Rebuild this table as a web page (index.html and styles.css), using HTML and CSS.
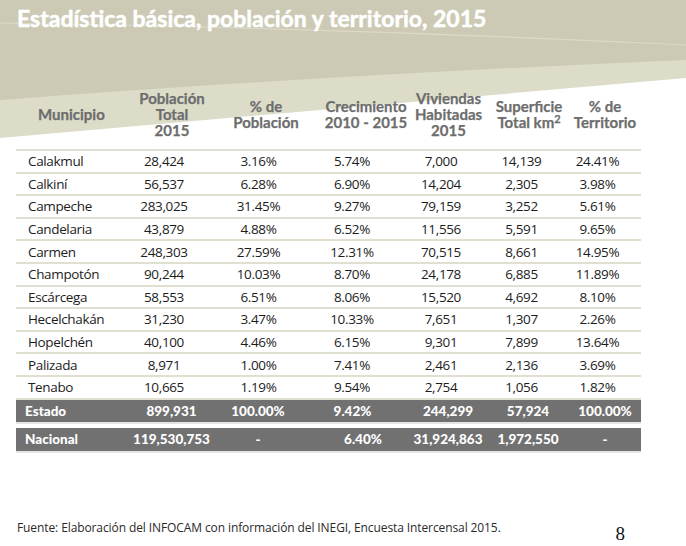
FILE: index.html
```html
<!DOCTYPE html>
<html lang="es">
<head>
<meta charset="utf-8">
<title>Estadística básica, población y territorio, 2015</title>
<link rel="stylesheet" href="styles.css">
</head>
<body>
<div class="slide">
  <svg class="backdrop" viewBox="0 0 686 150" preserveAspectRatio="none" aria-hidden="true">
    <polygon points="0,0 686,0 686,78 0,138" fill="#dcdcc9"/>
    <path d="M0 0 H686 V60 Q330 75 0 100 Z" fill="#cccab5"/>
    <path d="M0 23 Q340 28 686 45" stroke="#e2e0d2" stroke-width="1.2" fill="none" opacity="0.7"/>
  </svg>
  <h1 class="title">Estadística básica, población y territorio, 2015</h1>

  <div class="table">
    <div class="row head">
      <div class="k1"><span>Municipio</span></div>
      <div class="k2"><span>Población<br>Total<br>2015</span></div>
      <div class="k3"><span>% de<br>Población</span></div>
      <div class="k4"><span>Crecimiento<br>2010 - 2015</span></div>
      <div class="k5"><span>Viviendas<br>Habitadas<br>2015</span></div>
      <div class="k6"><span>Superficie<br>Total km<sup>2</sup></span></div>
      <div class="k7"><span>% de<br>Territorio</span></div>
    </div>

    <div class="rows">
      <div class="row data"><div class="k1">Calakmul</div><div class="k2">28,424</div><div class="k3">3.16%</div><div class="k4">5.74%</div><div class="k5">7,000</div><div class="k6">14,139</div><div class="k7">24.41%</div></div>
      <div class="row data"><div class="k1">Calkiní</div><div class="k2">56,537</div><div class="k3">6.28%</div><div class="k4">6.90%</div><div class="k5">14,204</div><div class="k6">2,305</div><div class="k7">3.98%</div></div>
      <div class="row data"><div class="k1">Campeche</div><div class="k2">283,025</div><div class="k3">31.45%</div><div class="k4">9.27%</div><div class="k5">79,159</div><div class="k6">3,252</div><div class="k7">5.61%</div></div>
      <div class="row data"><div class="k1">Candelaria</div><div class="k2">43,879</div><div class="k3">4.88%</div><div class="k4">6.52%</div><div class="k5">11,556</div><div class="k6">5,591</div><div class="k7">9.65%</div></div>
      <div class="row data"><div class="k1">Carmen</div><div class="k2">248,303</div><div class="k3">27.59%</div><div class="k4">12.31%</div><div class="k5">70,515</div><div class="k6">8,661</div><div class="k7">14.95%</div></div>
      <div class="row data"><div class="k1">Champotón</div><div class="k2">90,244</div><div class="k3">10.03%</div><div class="k4">8.70%</div><div class="k5">24,178</div><div class="k6">6,885</div><div class="k7">11.89%</div></div>
      <div class="row data"><div class="k1">Escárcega</div><div class="k2">58,553</div><div class="k3">6.51%</div><div class="k4">8.06%</div><div class="k5">15,520</div><div class="k6">4,692</div><div class="k7">8.10%</div></div>
      <div class="row data"><div class="k1">Hecelchakán</div><div class="k2">31,230</div><div class="k3">3.47%</div><div class="k4">10.33%</div><div class="k5">7,651</div><div class="k6">1,307</div><div class="k7">2.26%</div></div>
      <div class="row data"><div class="k1">Hopelchén</div><div class="k2">40,100</div><div class="k3">4.46%</div><div class="k4">6.15%</div><div class="k5">9,301</div><div class="k6">7,899</div><div class="k7">13.64%</div></div>
      <div class="row data"><div class="k1">Palizada</div><div class="k2">8,971</div><div class="k3">1.00%</div><div class="k4">7.41%</div><div class="k5">2,461</div><div class="k6">2,136</div><div class="k7">3.69%</div></div>
      <div class="row data"><div class="k1">Tenabo</div><div class="k2">10,665</div><div class="k3">1.19%</div><div class="k4">9.54%</div><div class="k5">2,754</div><div class="k6">1,056</div><div class="k7">1.82%</div></div>
    </div>

    <div class="row total estado"><div class="k1">Estado</div><div class="k2">899,931</div><div class="k3">100.00%</div><div class="k4">9.42%</div><div class="k5">244,299</div><div class="k6">57,924</div><div class="k7">100.00%</div></div>
    <div class="row total nacional"><div class="k1">Nacional</div><div class="k2">119,530,753</div><div class="k3">-</div><div class="k4">6.40%</div><div class="k5">31,924,863</div><div class="k6">1,972,550</div><div class="k7">-</div></div>
  </div>

  <div class="foot">
    <p class="source">Fuente: Elaboración del INFOCAM con información del INEGI, Encuesta Intercensal 2015.</p>
    <span class="pagenum">8</span>
  </div>
</div>
</body>
</html>
```

FILE: styles.css
```css
html, body {
  margin: 0;
  padding: 0;
  background: #ffffff;
}

.slide {
  position: relative;
  width: 686px;
  height: 546px;
  overflow: hidden;
  background: #ffffff;
}

.backdrop {
  position: absolute;
  left: 0;
  top: 0;
  width: 686px;
  height: 150px;
  z-index: 0;
}

.title {
  position: relative;
  z-index: 1;
  margin: 0;
  padding: 4px 0 0 17px;
  font-family: Lato, "Open Sans", sans-serif;
  font-weight: 700;
  font-size: 23px;
  line-height: 28px;
  color: #ffffff;
  letter-spacing: 0;
  -webkit-text-stroke: 0.5px #ffffff;
  white-space: nowrap;
}

.table {
  position: relative;
  z-index: 1;
  margin: 49px 0 0 16px;
  width: 625px;
}

.row {
  display: grid;
  grid-template-columns: 104px 98px 96px 93px 82px 78px 74px;
  align-items: center;
}

.row > div {
  display: flex;
  justify-content: center;
  white-space: nowrap;
}

.row > .k1 {
  justify-content: flex-start;
}

/* header */
.head {
  height: 66px;
  font-family: Lato, "Open Sans", sans-serif;
  font-weight: 700;
  font-size: 15px;
  line-height: 16px;
  color: #6d6d6d;
  -webkit-text-stroke: 0.25px #6d6d6d;
  margin-bottom: 2px;
}

.head span {
  display: block;
  text-align: center;
}

.head .k1 { padding-left: 22px; }
.head .k2 { padding-left: 6px; }
.head .k4 { padding-left: 11px; }
.head .k5 { padding-left: 1px; }
.head .k6 { padding-left: 2px; }
.head .k7 { padding-left: 2px; }

.head sup {
  font-size: 11px;
  line-height: 0;
  vertical-align: 5px;
}

/* body rows */
.rows {
  border-top: 2px solid #e1dfd0;
}

.data {
  height: 22.6px;
  box-sizing: border-box;
  border-bottom: 2px solid #e1dfd0;
  font-family: "Open Sans", sans-serif;
  font-size: 13.5px;
  line-height: 18px;
  color: #1c1c1c;
  letter-spacing: -0.35px;
}

.data .k1 { padding-left: 12px; }
.data .k2 { padding-right: 10px; }
.data .k3 { padding-right: 15px; }
.data .k4 { padding-right: 17px; }
.data .k5 { padding-right: 14px; }
.data .k6 { padding-right: 13px; }
.data .k7 { padding-right: 13px; }

/* totals */
.total {
  height: 24px;
  box-sizing: border-box;
  background: #717171;
  border-bottom: 2px solid #e4e4e4;
  font-family: Lato, "Open Sans", sans-serif;
  font-weight: 900;
  font-size: 13.5px;
  line-height: 18px;
  color: #ffffff;
}

.nacional {
  margin-top: 4px;
  height: 25px;
}

.total .k1 { padding-left: 9px; }
.total .k2 { padding-left: 5px; }
.total .k3 { padding-right: 16px; }
.estado .k4 { padding-right: 16px; }
.nacional .k4 { padding-left: 5px; }
.total .k7 { padding-left: 2px; }

/* footer */
.foot {
  display: flex;
  align-items: flex-start;
  margin-top: 67px;
  padding-left: 17px;
}

.source {
  margin: 0;
  font-family: "Open Sans", sans-serif;
  font-size: 12px;
  line-height: 16px;
  color: #2a2a2a;
  letter-spacing: -0.1px;
}

.pagenum {
  margin-left: auto;
  margin-right: 61px;
  margin-top: 4px;
  font-family: "Liberation Serif", serif;
  font-size: 19px;
  line-height: 20px;
  color: #111111;
}
```
